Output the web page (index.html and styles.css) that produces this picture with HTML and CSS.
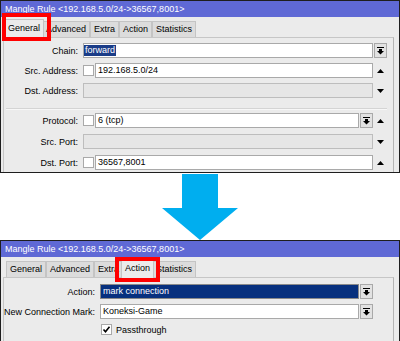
FILE: index.html
```html
<!DOCTYPE html>
<html>
<head>
<meta charset="utf-8">
<link rel="stylesheet" href="styles.css">
</head>
<body>
<div class="win win-top">
  <div class="title">Mangle Rule &lt;192.168.5.0/24-&gt;36567,8001&gt;</div>
  <div class="tabs">
    <div class="tab tab-sel">General</div>
    <div class="tab">Advanced</div>
    <div class="tab">Extra</div>
    <div class="tab">Action</div>
    <div class="tab">Statistics</div>
  </div>
  <div class="panel">
    <div class="rows">
      <div class="row">
        <div class="lbl">Chain:</div>
        <div class="inp inp-tight"><span class="hl">forward</span></div>
        <div class="btn"><svg width="7" height="8" viewBox="0 0 7 8"><rect x="0" y="0" width="7" height="1" fill="#000"/><rect x="2" y="2" width="3" height="2" fill="#000"/><polygon points="0,4 7,4 3.5,7.5" fill="#000"/></svg></div>
      </div>
      <div class="row">
        <div class="lbl">Src. Address:</div>
        <div class="cb"></div>
        <div class="inp">192.168.5.0/24</div>
        <div class="slot"><svg width="7" height="4" viewBox="0 0 7 4"><polygon points="0,4 7,4 3.5,0" fill="#000"/></svg></div>
      </div>
      <div class="row">
        <div class="lbl">Dst. Address:</div>
        <div class="inp inp-dis"></div>
        <div class="slot"><svg width="7" height="4" viewBox="0 0 7 4"><polygon points="0,0 7,0 3.5,4" fill="#000"/></svg></div>
      </div>
    </div>
    <div class="sep"></div>
    <div class="rows rows-b">
      <div class="row">
        <div class="lbl">Protocol:</div>
        <div class="cb"></div>
        <div class="inp">6 (tcp)</div>
        <div class="btn"><svg width="7" height="8" viewBox="0 0 7 8"><rect x="0" y="0" width="7" height="1" fill="#000"/><rect x="2" y="2" width="3" height="2" fill="#000"/><polygon points="0,4 7,4 3.5,7.5" fill="#000"/></svg></div>
        <div class="slot"><svg width="7" height="4" viewBox="0 0 7 4"><polygon points="0,4 7,4 3.5,0" fill="#000"/></svg></div>
      </div>
      <div class="row">
        <div class="lbl">Src. Port:</div>
        <div class="inp inp-dis"></div>
        <div class="slot"><svg width="7" height="4" viewBox="0 0 7 4"><polygon points="0,0 7,0 3.5,4" fill="#000"/></svg></div>
      </div>
      <div class="row">
        <div class="lbl">Dst. Port:</div>
        <div class="cb"></div>
        <div class="inp">36567,8001</div>
        <div class="slot"><svg width="7" height="4" viewBox="0 0 7 4"><polygon points="0,4 7,4 3.5,0" fill="#000"/></svg></div>
      </div>
    </div>
  </div>
  <div class="mark mark-top"></div>
</div>

<div class="arrow-area">
  <svg width="400" height="67" viewBox="0 0 400 67"><polygon points="182,1 218,1 218,35 238,35 200,67 162,35 182,35" fill="#00aeef"/></svg>
</div>

<div class="win win-bottom">
  <div class="title">Mangle Rule &lt;192.168.5.0/24-&gt;36567,8001&gt;</div>
  <div class="tabs">
    <div class="tab">General</div>
    <div class="tab">Advanced</div>
    <div class="tab">Extra</div>
    <div class="tab tab-sel">Action</div>
    <div class="tab">Statistics</div>
  </div>
  <div class="panel panel-b">
    <div class="rows">
      <div class="row">
        <div class="lbl lbl-wide">Action:</div>
        <div class="inp inp-sel">mark connection</div>
        <div class="btn"><svg width="7" height="8" viewBox="0 0 7 8"><rect x="0" y="0" width="7" height="1" fill="#000"/><rect x="2" y="2" width="3" height="2" fill="#000"/><polygon points="0,4 7,4 3.5,7.5" fill="#000"/></svg></div>
        <div class="slot"></div>
      </div>
      <div class="row">
        <div class="lbl lbl-wide">New Connection Mark:</div>
        <div class="inp">Koneksi-Game</div>
        <div class="btn"><svg width="7" height="8" viewBox="0 0 7 8"><rect x="0" y="0" width="7" height="1" fill="#000"/><rect x="2" y="2" width="3" height="2" fill="#000"/><polygon points="0,4 7,4 3.5,7.5" fill="#000"/></svg></div>
        <div class="slot"></div>
      </div>
      <div class="row row-check">
        <div class="lbl lbl-wide"></div>
        <div class="cb cb-on"><svg width="9" height="9" viewBox="0 0 9 9"><path d="M1.5 4.5 L3.5 6.8 L7.5 1.8" fill="none" stroke="#000" stroke-width="1.6"/></svg></div>
        <div class="check-text">Passthrough</div>
      </div>
    </div>
  </div>
  <div class="mark mark-bottom"></div>
</div>
</body>
</html>
```

FILE: styles.css
```css
* { box-sizing: border-box; }
html, body { margin: 0; padding: 0; }
body {
  width: 400px;
  height: 341px;
  overflow: hidden;
  background: #fff;
  font-family: "Liberation Sans", Arial, sans-serif;
  font-size: 9px;
  color: #000;
}
.win {
  position: relative;
  border: 1px solid #1e1e1e;
  background: #ebebeb;
  overflow: hidden;
}
.win-top { height: 173px; }
.win-bottom { height: 110px; }
.title {
  height: 16px;
  line-height: 16px;
  padding-left: 4px;
  background: #5f69d5;
  color: #fff;
  white-space: nowrap;
}
.tabs {
  display: flex;
  align-items: flex-end;
  height: 20px;
  padding-left: 5px;
}
.tab {
  height: 16px;
  line-height: 15px;
  padding: 0 3px;
  border: 1px solid #c4c4c4;
  border-bottom: none;
  background: #dcdcdc;
  white-space: nowrap;
}
.tab-sel {
  position: relative;
  z-index: 1;
  height: 19px;
  line-height: 16px;
  margin: 0 -2px -1px;
  background: #ebebeb;
}
.panel {
  margin: 0 5px 0 2px;
  border: 1px solid #c6c6c6;
  border-right-color: #b4b4b4;
  border-bottom: none;
  padding: 5px 6px 0 0;
  height: 200px;
}
.panel-b { padding-top: 6px; }
.rows {
  display: flex;
  flex-direction: column;
  gap: 5px;
}
.rows-b { gap: 6px; }
.row {
  display: flex;
  align-items: center;
  height: 15px;
}
.row-check { height: 11px; }
.lbl {
  flex: none;
  width: 79px;
  padding-right: 5px;
  text-align: right;
  white-space: nowrap;
}
.lbl-wide { width: 96px; }
.inp {
  flex: 1;
  height: 15px;
  line-height: 13px;
  padding-left: 2px;
  border: 1px solid #a9a9a9;
  background: #fff;
  white-space: nowrap;
  overflow: hidden;
}
.inp-tight { padding-left: 0; }
.hl {
  display: inline-block;
  line-height: 11px;
  margin-top: 1px;
  padding: 0 1px;
  background: #1a3c88;
  color: #fff;
}
.inp-dis {
  background: #e6e6e6;
  border-color: #bdbdbd;
}
.inp-sel {
  background: #07307e;
  border-color: #8a8a8a;
  color: #fff;
}
.btn {
  flex: none;
  display: flex;
  align-items: center;
  justify-content: center;
  width: 13px;
  height: 15px;
  margin-left: 1px;
  border: 1px solid #a9a9a9;
  background: #e2e2e2;
}
.slot {
  flex: none;
  display: flex;
  align-items: center;
  justify-content: center;
  width: 13px;
  height: 15px;
  margin-left: 1px;
}
.cb {
  flex: none;
  width: 11px;
  height: 11px;
  margin-right: 1px;
  border: 1px solid #a9a9a9;
  background: #fff;
}
.cb-on {
  display: flex;
  align-items: center;
  justify-content: center;
  margin-left: 1px;
}
.check-text { margin-left: 3px; white-space: nowrap; }
.sep {
  height: 2px;
  margin: 10px 0 3px 2px;
  border-top: 1px solid #d4d4d4;
  border-bottom: 1px solid #f7f7f7;
}
.mark {
  position: absolute;
  z-index: 5;
  border: 4px solid #f00;
}
.mark-top { left: 1px; top: 12px; width: 49px; height: 28px; }
.mark-bottom { left: 114px; top: 16px; width: 45px; height: 25px; }
.arrow-area { height: 67px; }
.arrow-area svg { display: block; }
```
